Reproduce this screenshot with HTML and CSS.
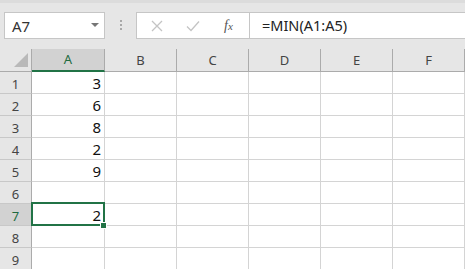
FILE: index.html
```html
<!DOCTYPE html>
<html lang="en">
<head>
    <meta charset="UTF-8">
    <title>Sheet</title>
    <link rel="stylesheet" href="styles.css">
</head>
<body>
    <div class="toolbar">
        <div class="name-box">
            <span>A7</span>
            <svg class="caret" width="8" height="5" viewBox="0 0 8 5"><path d="M0 0H8L4 4Z" fill="#767676"/></svg>
        </div>
        <div class="grip"><i></i><i></i><i></i></div>
        <div class="fx-buttons">
            <!-- cancel -->
            <svg width="12" height="12" viewBox="0 0 12 12"><path d="M1 1L11 11M11 1L1 11" stroke="#c4c4c4" stroke-width="1.3"/></svg>
            <!-- enter -->
            <svg width="14" height="12" viewBox="0 0 14 12"><path d="M1 6.5L5 10.5L13 1.5" stroke="#c4c4c4" stroke-width="1.3" fill="none"/></svg>
            <span class="fx">f<small>x</small></span>
        </div>
        <div class="formula">=MIN(A1:A5)</div>
    </div>

    <div class="sheet">
        <div class="corner"><span class="tri"></span></div>
        <div class="col-head active">A</div>
        <div class="col-head">B</div>
        <div class="col-head">C</div>
        <div class="col-head">D</div>
        <div class="col-head">E</div>
        <div class="col-head">F</div>

        <div class="row-head">1</div><div class="cell num">3</div><div class="cell"></div><div class="cell"></div><div class="cell"></div><div class="cell"></div><div class="cell"></div>
        <div class="row-head">2</div><div class="cell num">6</div><div class="cell"></div><div class="cell"></div><div class="cell"></div><div class="cell"></div><div class="cell"></div>
        <div class="row-head">3</div><div class="cell num">8</div><div class="cell"></div><div class="cell"></div><div class="cell"></div><div class="cell"></div><div class="cell"></div>
        <div class="row-head">4</div><div class="cell num">2</div><div class="cell"></div><div class="cell"></div><div class="cell"></div><div class="cell"></div><div class="cell"></div>
        <div class="row-head">5</div><div class="cell num">9</div><div class="cell"></div><div class="cell"></div><div class="cell"></div><div class="cell"></div><div class="cell"></div>
        <div class="row-head">6</div><div class="cell"></div><div class="cell"></div><div class="cell"></div><div class="cell"></div><div class="cell"></div><div class="cell"></div>
        <div class="row-head active">7</div><div class="cell num selected">2<span class="handle"></span></div><div class="cell"></div><div class="cell"></div><div class="cell"></div><div class="cell"></div><div class="cell"></div>
        <div class="row-head">8</div><div class="cell"></div><div class="cell"></div><div class="cell"></div><div class="cell"></div><div class="cell"></div><div class="cell"></div>
        <div class="row-head">9</div><div class="cell"></div><div class="cell"></div><div class="cell"></div><div class="cell"></div><div class="cell"></div><div class="cell"></div>
    </div>
</body>
</html>
```

FILE: styles.css
```css
body {
    margin: 0;
    font-family: "Noto Sans", "Open Sans", sans-serif;
    background: #e6e6e6;
    overflow: hidden;
}
.toolbar {
    height: 49px;
    box-sizing: border-box;
    border-top: 3px solid #dcdcdc;
    padding-top: 9px;
    display: flex;
    align-items: flex-start;
}
.name-box {
    margin-left: 4px;
    width: 101px;
    height: 27px;
    box-sizing: border-box;
    background: #fff;
    border: 1px solid #c6c6c6;
    display: flex;
    align-items: center;
    justify-content: space-between;
    padding: 0 5px 0 7px;
    font-size: 15px;
    color: #333;
}
.grip {
    width: 31px;
    display: flex;
    flex-direction: column;
    align-items: center;
    gap: 2px;
    padding-top: 8px;
}
.grip i {
    display: block;
    width: 2px;
    height: 2px;
    background: #a8a8a8;
}
.fx-buttons {
    width: 113px;
    height: 27px;
    box-sizing: border-box;
    background: #fff;
    border: 1px solid #c6c6c6;
    border-right: none;
    display: flex;
    align-items: center;
    gap: 23px;
    padding-left: 14px;
}
.fx {
    font-family: "Liberation Serif", serif;
    font-style: italic;
    font-size: 14px;
    color: #555;
    margin-left: 1px;
}
.fx small {
    font-size: 11px;
}
.formula {
    flex: 1;
    height: 27px;
    box-sizing: border-box;
    background: #fff;
    border: 1px solid #c6c6c6;
    border-right: none;
    padding-left: 12px;
    font-size: 14.5px;
    line-height: 24px;
    color: #222;
}
.sheet {
    display: grid;
    grid-template-columns: 32px 73px repeat(5, 72px);
    grid-template-rows: 23px repeat(9, 22px);
}
.corner {
    border-right: 1px solid #ababab;
    border-bottom: 1px solid #ababab;
    position: relative;
}
.tri {
    position: absolute;
    right: 3px;
    bottom: 4px;
    width: 0;
    height: 0;
    border-left: 14px solid transparent;
    border-bottom: 14px solid #b9b9b9;
}
.col-head {
    border-right: 1px solid #ababab;
    border-bottom: 1px solid #ababab;
    text-align: center;
    font-size: 13px;
    line-height: 22px;
    color: #444;
}
.col-head.active {
    background: #d2d2d2;
    border-bottom: 2px solid #217346;
    line-height: 21px;
    color: #1e6b40;
}
.row-head {
    border-right: 1px solid #ababab;
    border-bottom: 1px solid #c8c8c8;
    text-align: center;
    font-size: 13px;
    line-height: 24px;
    color: #444;
}
.row-head.active {
    background: #d2d2d2;
    color: #1e6b40;
}
.cell {
    background: #fff;
    border-right: 1px solid #d4d4d4;
    border-bottom: 1px solid #d4d4d4;
}
.num {
    text-align: right;
    padding-right: 3px;
    font-size: 15px;
    line-height: 23px;
    color: #111;
}
.selected {
    position: relative;
}
.selected::after {
    content: "";
    position: absolute;
    left: -1px;
    top: -2px;
    right: -1px;
    bottom: -1px;
    border: 2px solid #217346;
}
.handle {
    position: absolute;
    right: -3px;
    bottom: -4px;
    width: 5px;
    height: 5px;
    background: #217346;
    border: 1px solid #fff;
    z-index: 1;
}
```
